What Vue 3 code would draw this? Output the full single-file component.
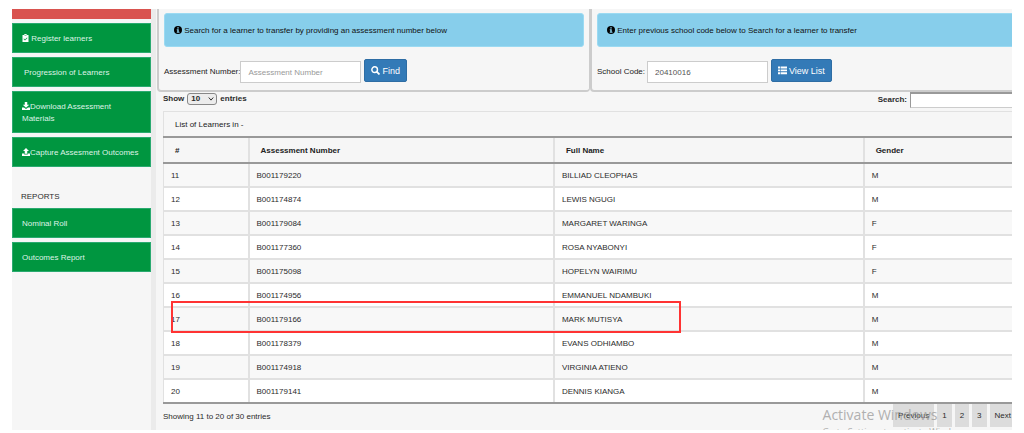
<script setup>
import { ref } from 'vue'

const learners = [
  [11, 'B001179220', 'BILLIAD CLEOPHAS', 'M'],
  [12, 'B001174874', 'LEWIS NGUGI', 'M'],
  [13, 'B001179084', 'MARGARET WARINGA', 'F'],
  [14, 'B001177360', 'ROSA NYABONYI', 'F'],
  [15, 'B001175098', 'HOPELYN WAIRIMU', 'F'],
  [16, 'B001174956', 'EMMANUEL NDAMBUKI', 'M'],
  [17, 'B001179166', 'MARK MUTISYA', 'M'],
  [18, 'B001178379', 'EVANS ODHIAMBO', 'M'],
  [19, 'B001174918', 'VIRGINIA ATIENO', 'M'],
  [20, 'B001179141', 'DENNIS KIANGA', 'M']
]
const pages = ['Previous', '1', '2', '3', 'Next']
const assessment = ref('')
const school = ref('20410016')
const size = ref('10')
const search = ref('')
</script>

<template>
  <div class="page">
    <div class="screen">
      <nav class="side">
        <div class="red"></div>
        <a href="#" class="item">
          <svg class="ico" viewBox="0 0 14 16"><path fill="currentColor" fill-rule="evenodd" d="M4 2a3 2 0 0 1 6 0h3v14H1V2zM5 3v1h4V3zM4 9l-1 1 3 3 5-5-1-1-4 4z" /></svg>
          Register learners
        </a>
        <a href="#" class="item indent">Progression of Learners</a>
        <a href="#" class="item"><svg class="ico wide" viewBox="0 0 16 16"><path fill="currentColor" d="M5.500 0h5v5.500h4L8 11.500 1.500 5.500h4zM0 11h4l4 3 4-3h4v5H0z" /></svg>Download Assessment Materials</a>
        <a href="#" class="item"><svg class="ico wide" viewBox="0 0 16 16"><path fill="currentColor" d="M8 0l6 6h-3.500v5.500h-5V6H2zM0 11h4.500v2h7v-2H16v5H0z" /></svg>Capture Assesment Outcomes</a>
        <h2 class="caption">REPORTS</h2>
        <a href="#" class="item">Nominal Roll</a>
        <a href="#" class="item">Outcomes Report</a>
      </nav>

      <main class="main">
        <div class="panels">
          <section class="panel">
            <p class="info">
              <svg class="ico" viewBox="0 0 16 16"><circle cx="8" cy="8" r="8" /><path fill="#87ceeb" d="M6.500 2.500h3v2.500h-3zM5.500 6.500h4v5h1.500v2H5.500v-2h1v-3h-1z" /></svg>
              Search for a learner to transfer by providing an assessment number below
            </p>
            <form class="line" @submit.prevent>
              <label for="assessment">Assessment Number:</label>
              <input id="assessment" v-model="assessment" class="field" type="text" placeholder="Assessment Number">
              <button class="btn">
                <svg class="ico big" viewBox="0 0 16 16"><circle cx="6.500" cy="6.500" r="5" fill="none" stroke="currentColor" stroke-width="2.600" /><path d="M10 10l5 5" stroke="currentColor" stroke-width="3.200" /></svg>
                Find
              </button>
            </form>
          </section>
          <section class="panel">
            <p class="info">
              <svg class="ico" viewBox="0 0 16 16"><circle cx="8" cy="8" r="8" /><path fill="#87ceeb" d="M6.500 2.500h3v2.500h-3zM5.500 6.500h4v5h1.500v2H5.500v-2h1v-3h-1z" /></svg>
              Enter previous school code below to Search for a learner to transfer
            </p>
            <form class="line" @submit.prevent>
              <label for="school">School Code:</label>
              <input id="school" v-model="school" class="field" type="text">
              <button class="btn">
                <svg class="ico big" viewBox="0 0 16 16"><path fill="currentColor" d="M0 1h4v3.500H0zM5 1h11v3.500H5zM0 6h4v3.500H0zM5 6h11v3.500H5zM0 11h4v3.500H0zM5 11h11v3.500H5z" /></svg>
                View List
              </button>
            </form>
          </section>
        </div>

        <div class="tools">
          <label class="length">Show
            <span class="pick">
              <select v-model="size"><option>10</option><option>25</option><option>50</option></select>
              <svg class="chev" viewBox="0 0 8 8"><path d="M1 2l3 3.500L7 2" fill="none" stroke="currentColor" stroke-width="1.300" /></svg>
            </span>
            entries</label>
          <label class="search">Search: <input v-model="search" type="search"></label>
        </div>

        <div class="grid">
          <table>
            <colgroup><col class="c1"><col class="c2"><col class="c3"><col></colgroup>
            <thead>
              <tr><td colspan="4" class="title">List of Learners in -</td></tr>
              <tr><th>#</th><th>Assessment Number</th><th>Full Name</th><th>Gender</th></tr>
            </thead>
            <tbody>
              <tr v-for="row in learners" :key="row[0]">
                <td v-for="(cell, i) in row" :key="i">{{ cell }}</td>
              </tr>
            </tbody>
          </table>
          <div class="mark"></div>
        </div>

        <footer class="foot">
          <span>Showing 11 to 20 of 30 entries</span>
          <div class="pager">
            <button v-for="p in pages" :key="p">{{ p }}</button>
          </div>
        </footer>
      </main>

      <div class="activate">
        <div class="big-line">Activate Windows</div>
        <div class="small-line">Go to Settings to activate Windows.</div>
      </div>
    </div>
  </div>
</template>

<style>
body { background: #fff; }
</style>

<style scoped>
* { box-sizing: border-box; }
.page {
  height: 100vh;
  padding: 9px 12px 3px;
  overflow: hidden;
  font: 8px/12px "Liberation Sans", Arial, sans-serif;
  color: #2b2b2b;
}
.screen {
  position: relative;
  display: flex;
  height: 100%;
  overflow: hidden;
  background: #f6f6f6;
}
input, select, button { font: inherit; color: inherit; margin: 0; }
.ico { width: 8px; height: 8px; vertical-align: -1px; flex: none; }
.side { flex: none; width: 139px; }
.red { height: 10px; margin-bottom: 4px; background: #d9534f; }
.item {
  display: block;
  margin-bottom: 4px;
  padding: 9px 9px 7px;
  border: 1px solid #2aaa70;
  background: #009640;
  color: #dff3e6;
  text-decoration: none;
}
.item .ico { width: 7px; color: #fff; }
.item .ico.wide { width: 8px; }
.item.indent { padding-left: 11px; }
.caption {
  margin: 24px 0 5px;
  padding-left: 9px;
  font-size: 8px;
  font-weight: 400;
}
.main {
  flex: 1;
  min-width: 0;
  border-left: 5px solid #ebebeb;
}
.panels { display: flex; padding-left: 1px; margin-right: -11px; }
.panel {
  flex: 1;
  min-width: 0;
  padding: 4px 5px 5px;
  border: 2px solid #ccc;
  border-width: 0 1px 2px 2px;
  border-radius: 0 0 4px 4px;
}
.info {
  margin: 0 0 12px;
  padding: 11px 9px 9px;
  border: 1px solid #9bdaf2;
  border-radius: 3px;
  background: #87ceeb;
  color: #111;
  white-space: nowrap;
}
.line { display: flex; align-items: center; }
.line label { min-width: 50px; white-space: nowrap; color: #222; }
.field {
  width: 121px;
  height: 22px;
  margin-right: 3px;
  padding: 0 7px;
  border: 1px solid #ccc;
  background: #fff;
  color: #555;
  outline: 0;
}
.field::placeholder { color: #999; opacity: 1; }
.btn {
  display: flex;
  align-items: center;
  gap: 2px;
  height: 23px;
  margin-bottom: 3px;
  padding: 0 6px;
  border: 1px solid #2e6da4;
  border-radius: 2px;
  background: #337ab7;
  color: #fff;
  font-size: 9px;
  white-space: nowrap;
}
.ico.big { width: 9px; height: 9px; }
.tools {
  display: flex;
  justify-content: space-between;
  align-items: flex-start;
  height: 19px;
  padding-left: 7px;
  font-weight: 700;
}
.length { display: flex; align-items: center; gap: 3px; height: 14px; }
.pick { position: relative; display: flex; }
.pick select {
  width: 30px;
  height: 12px;
  padding: 0 3px;
  border: 1px solid #888;
  border-radius: 3px;
  background: #ececec;
  line-height: 10px;
  appearance: none;
}
.chev { position: absolute; right: 3px; top: 3px; width: 6px; height: 6px; pointer-events: none; }
.search { display: flex; align-items: center; gap: 3px; height: 16px; }
.search input {
  width: 102px;
  height: 16px;
  border: 1px solid #ccc;
  border-width: 2px 0 1px 1px;
  border-color: #999 #ccc #ccc #999;
  background: #fff;
}
.grid { position: relative; margin-left: 7px; }
table { width: 100%; border-collapse: collapse; table-layout: fixed; }
.c1 { width: 85px; }
.c2 { width: 36%; }
.c3 { width: 36.5%; }
td, th {
  height: 24px;
  padding: 2px 7px 0;
  border: 2px solid #e1e1e1;
  border-right: 0;
  text-align: left;
}
td:first-child, th:first-child { border-left-width: 1px; }
th, .title { height: 26px; padding: 2px 11px 0; border-bottom: 2px solid #999; color: #222; }
.title { height: 25px; border-top: 1px solid #e1e1e1; }
tbody tr:nth-child(odd) { background: #f8f8f8; }
tbody tr:nth-child(even) { background: #fff; }
tbody tr:last-child td { border-bottom-color: #999; }
.mark {
  position: absolute;
  top: 190px;
  left: 1%;
  width: 60%;
  height: 32px;
  border: 2px solid #f33;
}
.foot {
  display: flex;
  justify-content: space-between;
  align-items: flex-start;
  padding-left: 7px;
}
.foot span { margin-top: 7px; }
.pager { display: flex; gap: 3px; margin-right: -4px; }
.pager button {
  height: 23px;
  padding: 1px 5px 0;
  border: 0;
  background: #dcdcdc;
}
.activate {
  position: absolute;
  right: 42px;
  top: 395px;
  font-family: "Open Sans", sans-serif;
  color: #999;
  opacity: .75;
  white-space: nowrap;
  pointer-events: none;
}
.big-line { font-size: 14px; line-height: 22px; }
.small-line { font-size: 9px; line-height: 12px; }
</style>
